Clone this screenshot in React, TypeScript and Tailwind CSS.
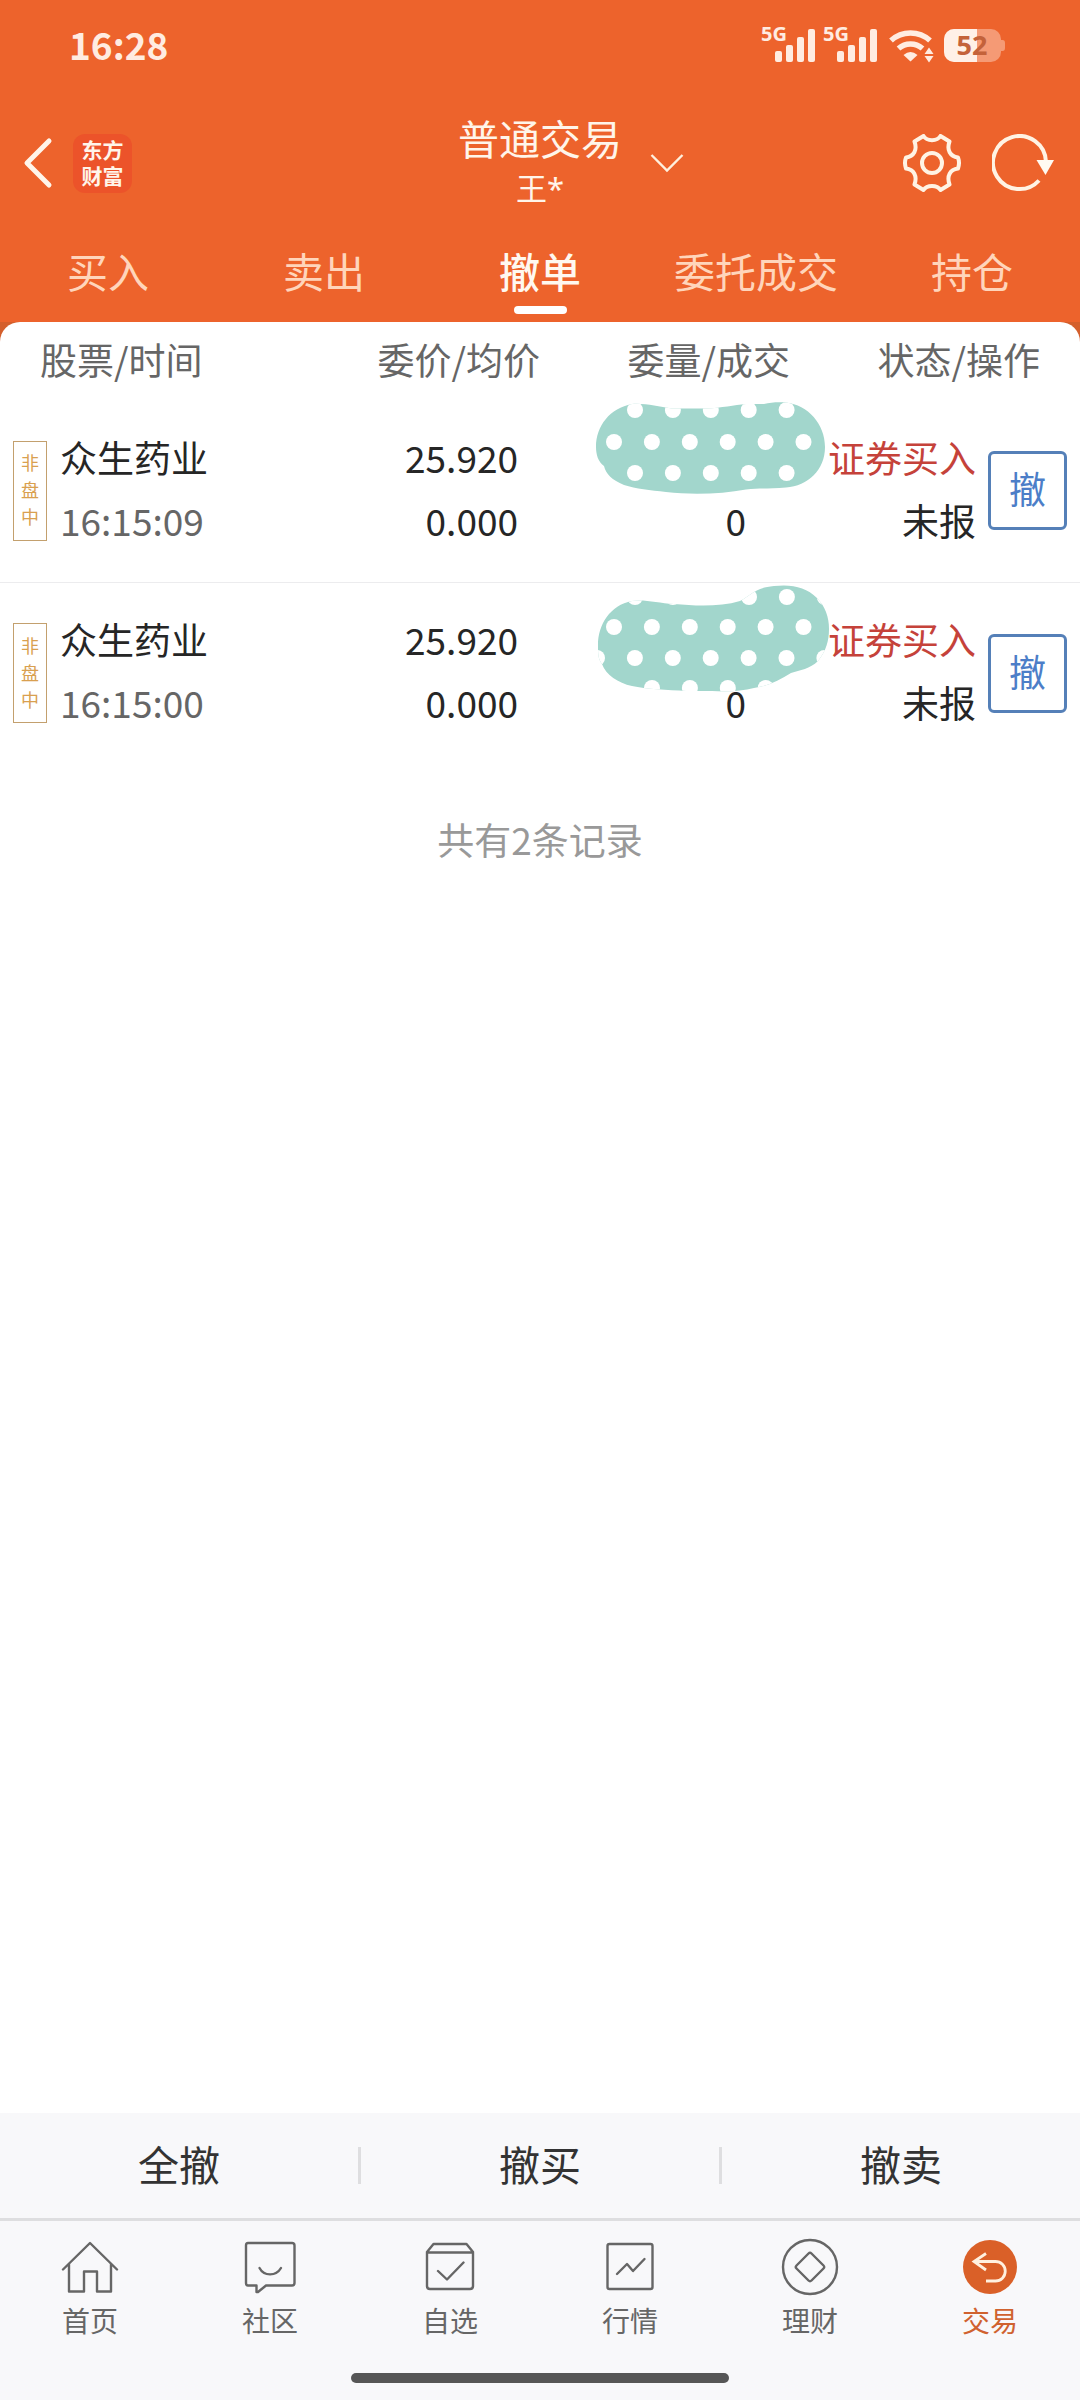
import { memo, useState, type ReactNode } from 'react';
import clsx from 'clsx';

type Order = {
  id: number;
  name: string;
  time: string;
  price: string;
  avgPrice: string;
  filled: string;
  side: string;
  status: string;
  sticker: ReactNode;
};

// Dotted sticker that hides the order quantity
const DottedSticker = memo(function DottedSticker({
  id,
  shape,
  height,
  dots,
  className,
}: {
  id: string;
  shape: string;
  height: number;
  dots: [number, number][];
  className: string;
}) {
  return (
    <svg
      className={className}
      width="236"
      height={height}
      viewBox={`0 0 236 ${height}`}
      aria-hidden="true"
    >
      <clipPath id={id}>
        <path d={shape} />
      </clipPath>
      <path d={shape} fill="#a2d6cc" />
      <g clipPath={`url(#${id})`} fill="#fff">
        {dots.map(([x, y]) => (
          <circle key={`${x}-${y}`} cx={x} cy={y} r="8" />
        ))}
      </g>
    </svg>
  );
});

const dotRow = (start: number, y: number, count: number) =>
  Array.from({ length: count }, (_, i): [number, number] => [start + i * 37.9, y]);

const ORDERS: Order[] = [
  {
    id: 1,
    name: '众生药业',
    time: '16:15:09',
    price: '25.920',
    avgPrice: '0.000',
    filled: '0',
    side: '证券买入',
    status: '未报',
    sticker: (
      <DottedSticker
        id="sticker-first"
        className="absolute top-[2px] left-14"
        height={94}
        shape="M36 2C50 1 62 5 76 6.500H110C126 6 138 3 150 2H168C175 0 184 0 190 0.500C212 3 229 22 229 45C229 68 212 84 190 85.500C174 87 164 86 150 87.500C126 92 96 93 70 90C54 88 40 87 28 83C16 78 10 72 8 64C2 60 0 52 0 45C0 24 14 6 36 2Z"
        dots={[
          ...dotRow(39, 8, 5),
          ...dotRow(18, 40, 6),
          ...dotRow(1, 71, 1),
          ...dotRow(39, 71, 5),
        ]}
      />
    ),
  },
  {
    id: 2,
    name: '众生药业',
    time: '16:15:00',
    price: '25.920',
    avgPrice: '0.000',
    filled: '0',
    side: '证券买入',
    status: '未报',
    sticker: (
      <DottedSticker
        id="sticker-second"
        className="absolute top-[2px] left-14"
        height={108}
        shape="M36 16C48 14 62 18 78 19C100 21 124 22 144 16C156 10 158 3 178 1C196 -1 210 2 221 13C229 21 233 32 233 44C233 56 230 66 222 76C214 84 204 85 195 88C184 95 172 101 158 103C146 106 132 107 116 106H90C72 105 50 104 36 101C22 98 10 90 6 79C2 74 2 68 2 60C2 40 14 20 36 16Z"
        dots={[
          ...dotRow(39, 12, 2),
          ...dotRow(153, 12, 3),
          ...dotRow(18, 42, 6),
          ...dotRow(1, 73, 7),
          ...dotRow(56, 103, 4),
        ]}
      />
    ),
  },
];

const TABS = ['买入', '卖出', '撤单', '委托成交', '持仓'];
const BATCH_ACTIONS = ['全撤', '撤买', '撤卖'];

function Signal() {
  return (
    <svg
      width="54"
      height="40"
      viewBox="0 0 54 40"
      fill="#ffece1"
      className="overflow-visible font-['Noto_Sans',sans-serif]"
    >
      <text x="0" y="15" fontSize="20" fontWeight="700">
        5G
      </text>
      <rect x="14" y="25" width="7" height="11" rx="2" />
      <rect x="25" y="19" width="7" height="17" rx="2" />
      <rect x="36" y="11" width="7" height="25" rx="2" />
      <rect x="47" y="3" width="7" height="33" rx="2" />
    </svg>
  );
}

function Wifi() {
  return (
    <svg width="45" height="40" viewBox="0 0 45 40" fill="none" stroke="#ffece1">
      <path d="M2 14.500A29 29 0 0 1 41 14.500" strokeWidth="5.500" />
      <path d="M9.500 22.500A18 18 0 0 1 33.500 22.500" strokeWidth="5.500" />
      <path d="M14.500 29Q21.500 23 28.500 29L21.500 35.500Z" fill="#ffece1" stroke="none" />
      <path d="M40 21.500L44.500 28H35.500ZM40 36.500L44.500 30H35.500Z" fill="#ffece1" stroke="none" />
    </svg>
  );
}

function Battery() {
  return (
    <svg width="62" height="40" viewBox="0 0 62 40" className="font-['Noto_Sans',sans-serif]">
      <clipPath id="battery-body">
        <rect y="3" width="57" height="33" rx="10" />
      </clipPath>
      <path d="M57 14h1.500q2.500 0 2.500 3v5q0 3-2.500 3H57z" fill="#f59a75" />
      <g clipPath="url(#battery-body)">
        <rect y="3" width="57" height="33" fill="#f59a75" />
        <rect y="3" width="33" height="33" fill="#fff0e7" />
      </g>
      <text x="28" y="29" fontSize="27" fontWeight="700" textAnchor="middle" fill="#c4623a">
        52
      </text>
    </svg>
  );
}

function GearIcon() {
  return (
    <svg width="58" height="58" viewBox="0 0 58 58" fill="none" stroke="#fff3e4" strokeWidth="4">
      <path
        strokeLinejoin="round"
        d="M20.500 2C24 7.500 34 7.500 37.500 2L46.500 7.500C43.500 16 47 22.500 55 23.500Q57 29 55 34.500C47 35.500 43.500 42 46.500 50.500L37.500 56C34 50.500 24 50.500 20.500 56L11.500 50.500C14.500 42 11 35.500 3 34.500Q1 29 3 23.500C11 22.500 14.500 16 11.500 7.500Z"
      />
      <circle cx="29" cy="29" r="10" />
    </svg>
  );
}

function RefreshIcon() {
  return (
    <svg width="62" height="58" viewBox="0 0 62 58" fill="none" stroke="#fff3e4" strokeWidth="4">
      <path d="M54 28A26.500 26.500 0 1 0 47 46.500" />
      <path d="M44.500 26H62L53.500 41Z" fill="#fffaf2" stroke="none" />
    </svg>
  );
}

function NavIcon({ children }: { children: ReactNode }) {
  return (
    <svg
      width="60"
      height="60"
      viewBox="0 0 60 60"
      fill="none"
      stroke="#666"
      strokeWidth="2.400"
      strokeLinecap="round"
      strokeLinejoin="round"
    >
      {children}
    </svg>
  );
}

const NAV_ITEMS = [
  {
    label: '首页',
    icon: (
      <NavIcon>
        <path d="M3 32.500L30 6L57 32.500M9 27V54.500H24V34.500H37V54.500H51V27" />
      </NavIcon>
    ),
  },
  {
    label: '社区',
    icon: (
      <NavIcon>
        <path d="M8 6H52Q54.500 6 54.500 8.500V46Q54.500 48.500 52 48.500H26L18 55H16.500V48.500H8Q6 48.500 6 46V8.500Q6 6 8 6Z" />
        <path d="M19.500 31C24 39.500 36 39.500 41 31" />
      </NavIcon>
    ),
  },
  {
    label: '自选',
    icon: (
      <NavIcon>
        <path d="M7 15L13.500 7H46.500L53 15V49Q53 52 50 52H10Q7 52 7 49ZM7 15.500H53M18 34L27 42.500L43.500 25.500" />
      </NavIcon>
    ),
  },
  {
    label: '行情',
    icon: (
      <NavIcon>
        <rect x="7.500" y="7" width="45" height="45" rx="2" />
        <path d="M17 37L27 27L33 34L44.500 22" />
      </NavIcon>
    ),
  },
  {
    label: '理财',
    icon: (
      <NavIcon>
        <circle cx="30" cy="30" r="27" />
        <path d="M28.500 16.500Q30 15 31.500 16.500L43.500 28.500Q45 30 43.500 31.500L31.500 43.500Q30 45 28.500 43.500L16.500 31.500Q15 30 16.500 28.500Z" />
      </NavIcon>
    ),
  },
  {
    label: '交易',
    icon: (
      <svg width="60" height="60" viewBox="0 0 60 60" fill="none">
        <circle cx="30" cy="30" r="27" fill="#da6028" />
        <path
          d="M26 16.500L14 24.500L26 33M14.500 24.500H35.500A9.750 9.750 0 0 1 35.500 44H26"
          stroke="#fff0de"
          strokeWidth="2.800"
        />
      </svg>
    ),
  },
];

function OrderRow({ order, last }: { order: Order; last: boolean }) {
  return (
    <tr className={clsx('h-[182px]', !last && 'border-b border-[#ececee]')}>
      <td className="pl-[13px]">
        <div className="flex items-center gap-[13px]">
          <span className="flex h-[100px] w-[34px] flex-col items-center justify-center border border-[#c3a06e] pb-0.5 text-[18px] leading-[27px] text-[#d9a050]">
            {Array.from('非盘中').map(char => (
              <span key={char}>{char}</span>
            ))}
          </span>
          <div className="pb-1">
            <div>{order.name}</div>
            <div className="text-[#666]">{order.time}</div>
          </div>
        </div>
      </td>
      <td className="pr-[22px] pb-1 text-right">
        <div>{order.price}</div>
        <div>{order.avgPrice}</div>
      </td>
      <td className="relative pr-16 pb-1 text-right">
        {order.sticker}
        <div>&nbsp;</div>
        <div>{order.filled}</div>
      </td>
      <td className="pr-[13px]">
        <div className="flex items-center justify-end gap-3">
          <div className="pb-1 text-right whitespace-nowrap">
            <div className="text-[#c5423a]">{order.side}</div>
            <div>{order.status}</div>
          </div>
          <button className="size-[79px] shrink-0 rounded-md border-3 border-[#5580b8] pb-1 text-[#4c7ec8]">
            撤
          </button>
        </div>
      </td>
    </tr>
  );
}

export default function App() {
  const [activeTab, setActiveTab] = useState('撤单');

  return (
    <div className="flex min-h-screen flex-col bg-white font-['Noto_Sans_CJK_SC',sans-serif] text-[37px] leading-[63px] text-[#262626]">
      <header className="bg-[#ed632c] text-[#fff5ea]">
        {/* Status bar */}
        <div className="flex h-[92px] items-center justify-between pr-[74px] pl-[69px]">
          <span className="pb-1 text-[37px] font-bold text-[#ffece1]">16:28</span>
          <div className="flex items-center">
            <div className="flex gap-2">
              <Signal />
              <Signal />
            </div>
            <div className="ml-3 flex gap-2.5">
              <Wifi />
              <Battery />
            </div>
          </div>
        </div>

        {/* Account title */}
        <div className="grid h-[142px] grid-cols-[1fr_auto_1fr] items-center">
          <div className="flex items-center gap-5 pl-[22px]">
            <button aria-label="返回">
              <svg width="31" height="52" viewBox="0 0 31 52" fill="none">
                <path
                  d="M27 4L5 26L27 48"
                  stroke="#fff5ea"
                  strokeWidth="5"
                  strokeLinecap="round"
                  strokeLinejoin="round"
                />
              </svg>
            </button>
            <div className="flex size-[59px] items-center justify-center rounded-xl bg-[#ec532a] pb-0.5 text-center text-[21px] leading-[26px] font-bold">
              <p className="w-[42px]">东方财富</p>
            </div>
          </div>
          <h1 className="text-center text-[41px] leading-[51px]">
            普通交易
            <span className="block font-['Noto_Sans','Noto_Sans_CJK_SC',sans-serif] text-[31px]">
              王*
            </span>
          </h1>
          <div className="flex items-center pr-[26px] pl-7">
            <button aria-label="切换账户">
              <svg width="34" height="20" viewBox="0 0 34 20" fill="none">
                <path d="M1.500 2L17 17.500L32.500 2" stroke="#fff0de" strokeWidth="2.400" />
              </svg>
            </button>
            <div className="ml-auto flex gap-[31px]">
              <button aria-label="设置">
                <GearIcon />
              </button>
              <button aria-label="刷新">
                <RefreshIcon />
              </button>
            </div>
          </div>
        </div>

        <nav className="grid grid-cols-5 pt-1.5 pb-2">
          {TABS.map(tab => (
            <button
              key={tab}
              onClick={() => setActiveTab(tab)}
              className={clsx(
                'flex flex-col items-center gap-1.5 text-[41px] leading-[60px]',
                tab === activeTab ? 'font-medium text-[#fff8f0]' : 'text-[#ffd5bb]'
              )}
            >
              {tab}
              <span
                className={clsx('h-2 w-[53px] rounded-full', tab === activeTab && 'bg-white')}
              />
            </button>
          ))}
        </nav>
      </header>

      <main className="flex-1 bg-linear-to-b from-[#d45f2c] from-[20px] to-white to-[20px]">
        <div className="rounded-t-[20px] bg-white">
          <table className="w-full table-fixed">
            <thead>
              <tr className="h-[78px] text-[#666]">
                <th className="w-[30%] pb-1 pl-10 text-left font-normal">股票/时间</th>
                <th className="w-[20%] pb-1 text-right font-normal">委价/均价</th>
                <th className="w-[25%] pr-5 pb-1 text-right font-normal">委量/成交</th>
                <th className="w-[25%] pr-10 pb-1 text-right font-normal">状态/操作</th>
              </tr>
            </thead>
            <tbody>
              {ORDERS.map((order, index) => (
                <OrderRow key={order.id} order={order} last={index === ORDERS.length - 1} />
              ))}
            </tbody>
          </table>
          <p className="pt-11 text-center text-[#999]">{`共有${ORDERS.length}条记录`}</p>
        </div>
      </main>

      <footer className="bg-[#f8f8fa]">
        <div className="flex h-[108px] items-center divide-x-3 divide-[#dedee0] border-b-3 border-[#dedee0]">
          {BATCH_ACTIONS.map(action => (
            <button
              key={action}
              className="flex h-[37px] flex-1 items-center justify-center pb-1 text-[41px] text-[#333]"
            >
              {action}
            </button>
          ))}
        </div>
        <nav className="grid grid-cols-6 pt-4">
          {NAV_ITEMS.map(({ label, icon }) => (
            <a
              key={label}
              href="#"
              className={clsx(
                'flex flex-col items-center gap-0.5 text-[28px] leading-[42px]',
                label === '交易' ? 'text-[#d0622f]' : 'text-[#666]'
              )}
            >
              {icon}
              {label}
            </a>
          ))}
        </nav>
        <div className="flex justify-center pt-8 pb-[17px]">
          <div className="h-2.5 w-[35%] rounded-full bg-[#565656]" />
        </div>
      </footer>
    </div>
  );
}
